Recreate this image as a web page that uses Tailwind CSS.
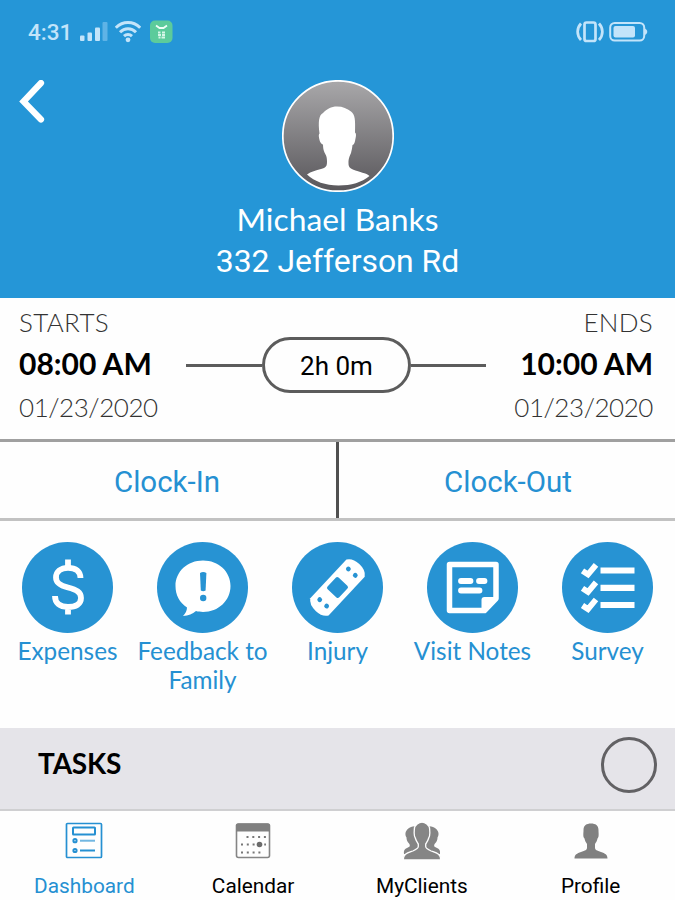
<!DOCTYPE html>
<html lang="en">
<head>
    <meta charset="UTF-8">
    <meta name="viewport" content="width=device-width, initial-scale=1.0">
    <title>Visit Dashboard</title>
    <script src="https://cdn.jsdelivr.net/npm/@tailwindcss/browser@4"></script>
</head>
<body class="w-[675px] h-[900px] overflow-hidden bg-[#fefefe] font-[Lato,sans-serif] text-black flex flex-col">

    <!--Blue header with the status bar and the client-->
    <header class="h-[298px] shrink-0 bg-[#2596d7] text-white">
        <div class="h-16 pl-7 pr-[27px] flex items-center text-[#c3e4fa]">
            <span class="w-[52px] font-[Roboto,sans-serif] font-medium text-[22.500px] leading-none whitespace-nowrap">4:31</span>
            <svg class="w-7 h-6" viewBox="0 0 28 24" fill="currentColor">
                <rect x="0" y="15.500" width="4.500" height="5.500" rx="1"/>
                <rect x="7.500" y="12.500" width="4.500" height="8.500" rx="1"/>
                <rect x="15" y="7.500" width="5" height="13.500" rx="1"/>
                <rect x="22.500" y="2" width="5" height="19" rx="1" fill="#5fb3e6"/>
            </svg>
            <svg class="ml-[7px] w-[26px] h-6" viewBox="0 0 26 24" fill="none" stroke="currentColor" stroke-width="3">
                <path d="M.8 7.800c7-7 17.400-7 24.400 0M5 12.200c4.600-4.600 11.400-4.600 16 0M9 16.200c2.400-2.200 5.600-2.200 8 0"/>
                <circle cx="13" cy="19.800" r="2.400" fill="currentColor" stroke="none"/>
            </svg>
            <svg class="ml-[9px] w-[23px] h-6" viewBox="0 0 23 24">
                <rect x="0" y="0.500" width="22.500" height="22.500" rx="5" fill="#5ccb9b"/>
                <path d="M6 5.500l3.500 2.500h4L17 5.500" fill="none" stroke="#f0fff8" stroke-width="1.800"/>
                <path d="M8 12.500h2.500M12 12.500h3M8 15h3M12 15h3M8.500 17.500h2M11.500 17.500H15" stroke="#d5f6e7" stroke-width="2"/>
            </svg>
            <svg class="ml-auto w-7 h-6" viewBox="0 0 28 24" fill="none" stroke="currentColor" stroke-width="2.700">
                <rect x="8.500" y="2.500" width="11" height="18.500" rx="2"/>
                <path d="M5 3.500c-4.500 5-4.500 11.500 0 16.500M23 3.500c4.500 5 4.500 11.500 0 16.500"/>
            </svg>
            <svg class="ml-1 w-[40px] h-6" viewBox="0 0 40 24">
                <rect x="2.200" y="3" width="34" height="17.500" rx="4.500" fill="none" stroke="currentColor" stroke-width="2"/>
                <rect x="5.500" y="6" width="21.500" height="11.500" rx="2" fill="currentColor"/>
                <path d="M37 8.500c3 1.500 3 5 0 6.500z" fill="currentColor"/>
            </svg>
        </div>

        <div class="grid grid-cols-3 pt-4">
            <svg class="w-[26px] h-[44px] ml-[19px]" viewBox="0 0 26 44" fill="none" stroke="white" stroke-width="6.200" stroke-linecap="round" stroke-linejoin="miter">
                <path d="M22 3L4.500 21.500L22 39.500"/>
            </svg>
            <svg class="w-28 h-28 mx-auto" viewBox="0 0 112 112">
                <defs>
                    <linearGradient id="avatar" x1="0" y1="0" x2="0" y2="1">
                        <stop offset="0" stop-color="#a9a8aa"/>
                        <stop offset="1" stop-color="#59575b"/>
                    </linearGradient>
                </defs>
                <circle cx="56" cy="56" r="55.200" fill="url(#avatar)" stroke="white" stroke-width="1.700"/>
                <path fill="white" d="M55 26.500c6 0 10 2 14 5 4 3 4.500 8 4 21 1.500 1 1 3.500.5 6-.5 3-1 6-3 6.500-.3 3-1 6-1.500 8-1.500 4-2.500 5-2.500 10 0 4 1 5.500 7 7.500 7 2.500 12 3 14 5.500-8 6.500-18 9.500-31 9.500s-24-4-31.500-11c4-3 9-4 14-5.500 5-1.500 6-2.500 6-7.500s-1-6-2.500-9c-1-2-1.500-5-1.500-8-2.500-.5-3.500-4-4-7-.3-2-.3-3 .5-4-1.500-12-.5-18.500 3.500-20.500 4-4 8-6.500 14-6.500z"/>
            </svg>
        </div>
        <h1 class="mt-[7px] text-center text-[31.800px] leading-10">Michael Banks</h1>
        <p class="mt-[1.500px] text-center font-[Roboto,sans-serif] text-[31.900px] leading-10">332 Jefferson Rd</p>
    </header>

    <!--Start and end of the visit-->
    <section class="h-[141px] shrink-0 pl-[19px] pr-[22px] flex justify-between">
        <div class="w-[167px] whitespace-nowrap text-[#333]">
            <p class="pt-2 text-[26px] leading-8 font-light tracking-[0.3px]">STARTS</p>
            <p class="pt-1 text-[30px] leading-[42px] font-bold text-black">08:00 AM</p>
            <p class="pt-[3px] text-[26px] leading-10 font-light tracking-[-0.45px]">01/23/2020</p>
        </div>
        <div class="pt-[39px] flex items-start">
            <div class="mt-[27px] w-[76px] h-[3px] bg-[#5c5c5c]"></div>
            <div class="w-[149px] h-[56px] rounded-full border-3 border-[#5c5c5c] flex items-center justify-center font-[Roboto,sans-serif] text-[26px] leading-none pt-0.5">2h 0m</div>
            <div class="mt-[27px] w-[75px] h-[3px] bg-[#5c5c5c]"></div>
        </div>
        <div class="w-[167px] whitespace-nowrap text-right text-[#333]">
            <p class="pt-2 text-[26px] leading-8 font-light tracking-[0.3px]">ENDS</p>
            <p class="pt-1 text-[30px] leading-[42px] font-bold text-black">10:00 AM</p>
            <p class="pt-[3px] text-[26px] leading-10 font-light tracking-[-0.45px]">01/23/2020</p>
        </div>
    </section>

    <!--Clock buttons-->
    <section class="h-[82px] shrink-0 border-t-3 border-b-3 border-t-[#a0a0a0] border-b-[#c2c2c2] flex font-[Roboto,sans-serif] text-[29.500px] text-[#2590d2]">
        <button class="w-[339px] border-r-3 border-[#505050] pt-1 pr-0.5">Clock-In</button>
        <button class="flex-1 pt-1 pl-0.5">Clock-Out</button>
    </section>

    <!--Visit actions-->
    <section class="h-[207px] shrink-0 pt-[20.500px] grid grid-cols-5 text-center text-[24.300px] leading-[29px] text-[#2590d2]">
        <div class="flex flex-col items-center">
            <svg class="w-[91px] h-[91px] shrink-0" viewBox="0 0 91 91">
                <circle cx="45.500" cy="45.500" r="45.500" fill="#2793d3"/>
                <path d="M58.500 36c0-6.500-4.500-10.200-12.500-10.200-7.500 0-12 4-12 9.700 0 5.500 4 8 12 10 8.500 2.200 13 4.500 13 10.500S54 65 46 65c-8.500 0-13-4-13-11M46 17.500V26M46 65v7.500" fill="none" stroke="white" stroke-width="5.800"/>
            </svg>
            <span class="mt-[3.500px]">Expenses</span>
        </div>
        <div class="flex flex-col items-center">
            <svg class="w-[91px] h-[91px] shrink-0" viewBox="0 0 91 91">
                <circle cx="45.500" cy="45.500" r="45.500" fill="#2793d3"/>
                <path fill="white" d="M46 18.500c15.500 0 27.500 11 27.500 25.500S61.500 70 46 70c-2.500 0-5-.3-7-.9-3.500 2.800-7.500 5-13 5 2.500-2.500 4-5.500 4-8.500C22.500 60.500 18.500 53 18.500 44 18.500 29.500 30.500 18.500 46 18.500z"/>
                <path fill="#2793d3" d="M43 31q3.200-2 6.400 0l-.8 17.500q-2.400 1.500-4.800 0z"/>
                <circle cx="46.200" cy="56" r="3.200" fill="#2793d3"/>
            </svg>
            <span class="mt-[3.500px]">Feedback to<br>Family</span>
        </div>
        <div class="flex flex-col items-center">
            <svg class="w-[91px] h-[91px] shrink-0" viewBox="0 0 91 91">
                <circle cx="45.500" cy="45.500" r="45.500" fill="#2793d3"/>
                <g transform="rotate(-47 45.500 45.500)">
                    <path fill="white" d="M19 33h53q5.500 3.500 5.500 12.500T72 58H19q-5.500-3.500-5.500-12.500T19 33z"/>
                    <rect x="37.500" y="37.500" width="16" height="16" rx="2" fill="#2793d3"/>
                    <g fill="#2793d3">
                        <circle cx="24.500" cy="40.800" r="2.400"/>
                        <circle cx="24.500" cy="50.200" r="2.400"/>
                        <circle cx="66.500" cy="40.800" r="2.400"/>
                        <circle cx="66.500" cy="50.200" r="2.400"/>
                    </g>
                </g>
            </svg>
            <span class="mt-[3.500px]">Injury</span>
        </div>
        <div class="flex flex-col items-center">
            <svg class="w-[91px] h-[91px] shrink-0" viewBox="0 0 91 91">
                <circle cx="45.500" cy="45.500" r="45.500" fill="#2793d3"/>
                <path d="M22.500 22.500h46.500v34L57.500 68.500h-35z" fill="none" stroke="white" stroke-width="5.500" stroke-linejoin="round"/>
                <path fill="white" d="M54.500 70V58q0-3 3-3H70v2z"/>
                <path d="M34 39h9.500M52 39h5.500M34 48.500h18.500" stroke="white" stroke-width="5.800" stroke-linecap="round"/>
            </svg>
            <span class="mt-[3.500px]">Visit Notes</span>
        </div>
        <div class="flex flex-col items-center">
            <svg class="w-[91px] h-[91px] shrink-0" viewBox="0 0 91 91">
                <circle cx="45.500" cy="45.500" r="45.500" fill="#2793d3"/>
                <path d="M38.500 28.500h34M38.500 45.800h34M38.500 63h34" stroke="white" stroke-width="6.200"/>
                <path d="M20.500 28.800l5.500 3.700L34 22.800M20.500 46.300l5.500 3.700L34 40.300M20.500 63.500l5.500 3.700L34 57.500" fill="none" stroke="white" stroke-width="5.800"/>
            </svg>
            <span class="mt-[3.500px]">Survey</span>
        </div>
    </section>

    <section class="h-[83px] shrink-0 bg-[#e5e4e9] border-b-2 border-[#cfcfd1] pl-[38px] pr-[18px] flex items-center justify-between">
        <h2 class="pb-3 text-[28px] leading-none font-bold tracking-[-0.2px]">TASKS</h2>
        <div class="mt-[-8px] w-14 h-14 rounded-full border-3 border-[#626164]"></div>
    </section>

    <!--Bottom navigation-->
    <nav class="flex-1 pt-[11px] grid grid-cols-4 text-center font-[Roboto,sans-serif] text-[20.800px] leading-6">
        <a class="flex flex-col items-center text-[#2590d2]">
            <svg class="w-[38px] h-[38px]" viewBox="0 0 38 38" fill="none" stroke="currentColor" stroke-width="2">
                <rect x="1.500" y="1.500" width="35" height="34" rx="1" stroke-width="1.700"/>
                <rect x="8" y="5.500" width="22" height="7" rx=".5"/>
                <path d="M15 18.700h15" stroke-opacity=".65"/>
                <path d="M15 28.500h15"/>
                <circle cx="10" cy="18.700" r="1.600"/>
                <circle cx="10" cy="28.500" r="1.600"/>
            </svg>
            <span class="mt-[14px]">Dashboard</span>
        </a>
        <a class="flex flex-col items-center">
            <svg class="w-[38px] h-[38px]" viewBox="0 0 38 38">
                <rect x="2.500" y="2" width="33" height="33.500" rx="2" fill="none" stroke="#858585" stroke-width="1.600"/>
                <path d="M2 9.500V3.500Q2 1.500 4 1.500h30q2 0 2 2v6z" fill="#808080"/>
                <path d="M12.500 15h20M7 22.500h25M7 30.500h20" stroke="#777" stroke-width="2" stroke-dasharray="2 3.800"/>
                <circle cx="25.500" cy="22.500" r="2.800" fill="#6b6b6b"/>
            </svg>
            <span class="mt-[14px]">Calendar</span>
        </a>
        <a class="flex flex-col items-center">
            <svg class="w-[38px] h-[38px]" viewBox="0 0 38 38" fill="#858585">
                <path d="M8 5c5-2 9 0 9 5 0 5-1 8-2.500 10 0 4 2 5 7 7v5H1c-.5-4 1-5.500 4-6.500 2.500-1 2-2.500 1-4-2-2-2.500-4-2.500-6C1.500 12.500 2 7.500 8 5zM30 5c-5-2-9 0-9 5 0 5 1 8 2.500 10 0 4-2 5-7 7v5H37c.5-4-1-5.500-4-6.500-2.500-1-2-2.500-1-4 2-2 2.500-4 2.500-6 2-3 1.500-8-4.500-10.500z"/>
                <path stroke="#fefefe" stroke-width="1.300" d="M19 .2c2.500 0 7.700 2 7.700 7.300 0 3 .8 6-1 8.500-.8 3-2 4.500-3 6v2.500c0 2 2 3 5.500 4.500 6 2.200 9.500 3 9.500 9H.3c0-6 3.500-6.800 9.500-9 3.500-1.500 5.500-2.500 5.500-4.500V22c-1-1.500-2.200-3-3-6-1.800-2.500-1-5.500-1-8.500C11.300 2.200 16.500.2 19 .2z"/>
            </svg>
            <span class="mt-[14px]">MyClients</span>
        </a>
        <a class="flex flex-col items-center">
            <svg class="w-[38px] h-[38px]" viewBox="0 0 38 38" fill="#808080">
                <path d="M19 1.500c4.500 0 7.500 2 7.500 6.500 0 3 .8 7-1 8.500-.5 2.500-1.500 4-2.500 5.500v4c0 2 2 2.500 6 4s6.500 2.500 6.500 6.500h-33c0-4 2.500-5 6.500-6.500s6-2 6-4v-4c-1-1.500-2-3-2.500-5.500-1.800-1.500-1-5.500-1-8.500 0-4.500 3-6.500 7.500-6.500z"/>
            </svg>
            <span class="mt-[14px]">Profile</span>
        </a>
    </nav>
</body>
</html>
